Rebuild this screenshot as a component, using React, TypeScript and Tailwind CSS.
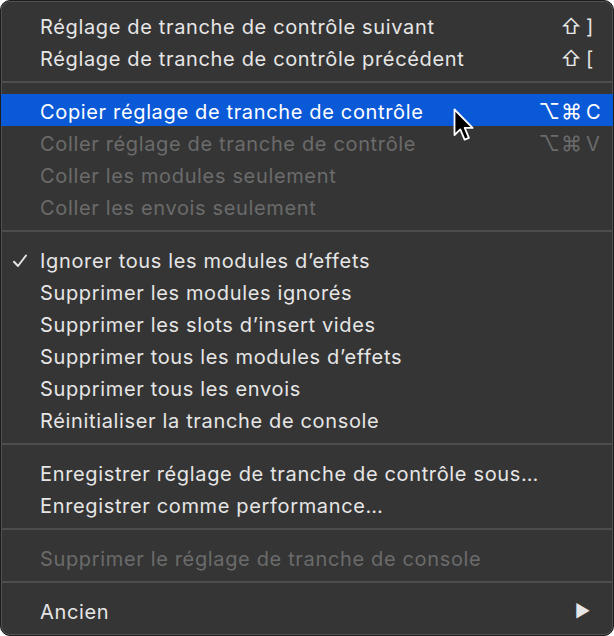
import React from 'react';

type Item =
  | { kind: 'sep' }
  | {
      kind: 'item';
      label: string;
      mods?: string;
      keyChar?: string;
      disabled?: boolean;
      active?: boolean;
      checked?: boolean;
      submenu?: boolean;
    };

const ITEMS: Item[] = [
  { kind: 'item', label: 'Réglage de tranche de contrôle suivant', mods: '⇧', keyChar: ']' },
  { kind: 'item', label: 'Réglage de tranche de contrôle précédent', mods: '⇧', keyChar: '[' },
  { kind: 'sep' },
  { kind: 'item', label: 'Copier réglage de tranche de contrôle', mods: '⌥⌘', keyChar: 'C', active: true },
  { kind: 'item', label: 'Coller réglage de tranche de contrôle', mods: '⌥⌘', keyChar: 'V', disabled: true },
  { kind: 'item', label: 'Coller les modules seulement', disabled: true },
  { kind: 'item', label: 'Coller les envois seulement', disabled: true },
  { kind: 'sep' },
  { kind: 'item', label: 'Ignorer tous les modules d’effets', checked: true },
  { kind: 'item', label: 'Supprimer les modules ignorés' },
  { kind: 'item', label: 'Supprimer les slots d’insert vides' },
  { kind: 'item', label: 'Supprimer tous les modules d’effets' },
  { kind: 'item', label: 'Supprimer tous les envois' },
  { kind: 'item', label: 'Réinitialiser la tranche de console' },
  { kind: 'sep' },
  { kind: 'item', label: 'Enregistrer réglage de tranche de contrôle sous…' },
  { kind: 'item', label: 'Enregistrer comme performance…' },
  { kind: 'sep' },
  { kind: 'item', label: 'Supprimer le réglage de tranche de console', disabled: true },
  { kind: 'sep' },
  { kind: 'item', label: 'Ancien', submenu: true },
];

function Cursor() {
  return (
    <svg
      className="absolute left-[448px] top-[105px]"
      width="32"
      height="38"
      viewBox="0 0 32 38"
    >
      <path
        d="M5.5 3.5 L5.5 29 L11.3 23.4 L15.6 33.6 L19.9 31.8 L15.7 21.9 L23.6 21.9 Z"
        fill="#000"
        stroke="#fff"
        strokeWidth="1.8"
        strokeLinejoin="round"
      />
    </svg>
  );
}

function Check() {
  return (
    <svg width="16" height="16" viewBox="0 0 16 16">
      <path
        d="M2 8.8 L6 13 L14 2.5"
        fill="none"
        stroke="#e4e4e4"
        strokeWidth="2"
        strokeLinecap="round"
        strokeLinejoin="round"
      />
    </svg>
  );
}

export default function App() {
  return (
    <div className="w-[614px] h-[636px] bg-white">
      <div
        className="relative w-[614px] h-[636px] rounded-[10px] border border-[#1d1d1d] bg-[#353535] shadow-[inset_0_0_0_1px_rgba(255,255,255,0.14)] pt-[8px] overflow-hidden"
        style={{ fontFamily: 'Inter, "Noto Sans", sans-serif' }}
      >
        {ITEMS.map((it, i) => {
          if (it.kind === 'sep') {
            return (
              <div key={i} className="h-[21px] pt-[8px]">
                <div className="h-[2px] bg-[#4d4d4d]" />
              </div>
            );
          }
          const color = it.active
            ? 'text-white'
            : it.disabled
              ? 'text-[#6b6b6b]'
              : 'text-[#e6e6e6]';
          return (
            <div
              key={i}
              className={`flex items-center h-[32px] pt-[3px] text-[20px] tracking-[0.65px] ${color} ${
                it.active ? 'bg-[#0a5ad8]' : ''
              }`}
            >
              <div className="w-[39px] flex pl-[11px]">
                {it.checked ? <Check /> : null}
              </div>
              <div className="flex-1 whitespace-nowrap">{it.label}</div>
              {it.mods && (
                <div className="flex items-center pr-[12px] tracking-normal">
                  <span className="text-right text-[21px] tracking-[1px]">{it.mods}</span>
                  <span className="w-[18px] pl-[3px]">{it.keyChar}</span>
                </div>
              )}
              {it.submenu && (
                <div className="pr-[22px] text-[17px] text-[#e6e6e6]">▶</div>
              )}
            </div>
          );
        })}
        <Cursor />
      </div>
    </div>
  );
}
